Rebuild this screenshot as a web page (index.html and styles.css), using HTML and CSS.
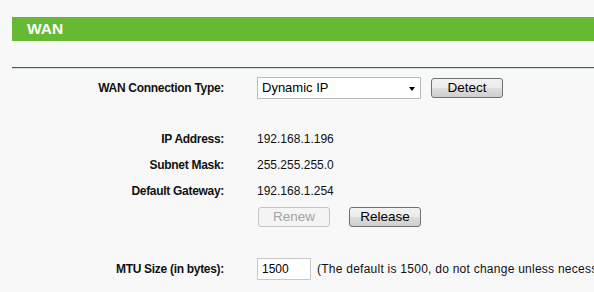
FILE: index.html
```html
<html>
<head>
<title>WAN</title>
<link rel="stylesheet" href="styles.css">
</head>
<body>
<div class="titleBar">WAN</div>
<div class="rule"></div>

<div class="formGrid">
    <div class="label rowTop">WAN Connection Type:</div>
    <div class="value rowTop">
        <div class="selectBox">Dynamic IP<span class="arrow"></span></div>
        <span class="btn detectBtn">Detect</span>
    </div>

    <div class="label rowInfo firstInfo">IP Address:</div>
    <div class="value rowInfo firstInfo">192.168.1.196</div>

    <div class="label rowInfo">Subnet Mask:</div>
    <div class="value rowInfo">255.255.255.0</div>

    <div class="label rowInfo">Default Gateway:</div>
    <div class="value rowInfo">192.168.1.254</div>

    <div class="label rowButtons"></div>
    <div class="value rowButtons">
        <span class="btn btnDisabled renewBtn">Renew</span>
        <span class="btn releaseBtn">Release</span>
    </div>

    <div class="label rowMtu">MTU Size (in bytes):</div>
    <div class="value rowMtu">
        <div class="textBox">1500</div>
        <span class="note">(The default is 1500, do not change unless necessary.)</span>
    </div>
</div>
</body>
</html>
```

FILE: styles.css
```css
body{
    margin: 0;
    background-color: #f8f8f8;
    font-family: "Liberation Sans", Arial, sans-serif;
    font-size: 12px;
    color: #111;
    overflow: hidden;
}
.titleBar{
    margin-left: 12px;
    margin-top: 17px;
    height: 24px;
    line-height: 24px;
    padding-left: 15px;
    background-color: #66b933;
    color: #fff;
    font-weight: bold;
    font-size: 15.5px;
}
.rule{
    margin-left: 12px;
    margin-top: 26px;
    border-top: 1px solid #2b6f4a;
    border-bottom: 1px solid #cfe0d5;
}
.formGrid{
    display: grid;
    grid-template-columns: 224px 1fr;
    column-gap: 33px;
    margin-top: 8px;
    white-space: nowrap;
}
.label{
    text-align: right;
    font-weight: bold;
    letter-spacing: -0.3px;
    display: flex;
    align-items: center;
    justify-content: flex-end;
}
.value{
    display: flex;
    align-items: center;
}
.rowTop{
    height: 22px;
}
.firstInfo{
    margin-top: 27px;
}
.rowInfo{
    height: 26px;
}
.rowButtons{
    height: 20px;
    margin-top: 3px;
}
.rowMtu{
    height: 22px;
    margin-top: 31px;
}
.selectBox{
    position: relative;
    box-sizing: border-box;
    width: 164px;
    height: 22px;
    border: 1px solid #b9b9b9;
    background-color: #fff;
    font-size: 13px;
    line-height: 20px;
    padding-left: 4px;
    color: #000;
}
.arrow{
    position: absolute;
    right: 5px;
    top: 9px;
    border-left: 3.5px solid transparent;
    border-right: 3.5px solid transparent;
    border-top: 4px solid #000;
}
.btn{
    box-sizing: border-box;
    display: inline-block;
    width: 72px;
    height: 20px;
    line-height: 18px;
    text-align: center;
    font-size: 13.5px;
    color: #000;
    border: 1px solid #707070;
    border-radius: 3px;
    background: linear-gradient(#f2f2f2 0%, #ebebeb 50%, #dddddd 51%, #cfcfcf 100%);
}
.detectBtn{
    margin-left: 10px;
}
.renewBtn{
    margin-left: 1px;
}
.releaseBtn{
    margin-left: 19px;
}
.btnDisabled{
    color: #a3a3a3;
    border-color: #c4c4c4;
    background: #f4f4f4;
}
.textBox{
    box-sizing: border-box;
    width: 54px;
    height: 22px;
    border: 1px solid #c8c8c8;
    background-color: #fff;
    padding-left: 4px;
    line-height: 20px;
    color: #000;
}
.note{
    margin-left: 6px;
    letter-spacing: 0.25px;
}
```
